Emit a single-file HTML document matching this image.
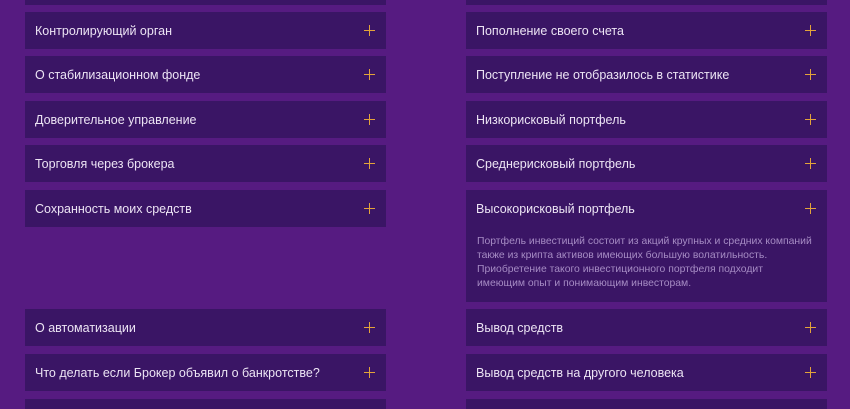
<!DOCTYPE html><html><head><meta charset="utf-8"><style>
html{overflow:hidden;height:409px}
body{margin:0;width:850px;height:409px;background:#561b81;overflow:hidden;font-family:"Liberation Sans",sans-serif;position:relative}
.c{position:absolute;background:#3a1565;width:361px;}
.t{position:absolute;left:10px;top:12px;font-size:12.5px;color:#ece4f4;white-space:nowrap}
.p{position:absolute;right:11px;top:13px;width:11px;height:11px}
.p:before{content:"";position:absolute;left:5px;top:0;width:1.3px;height:11px;background:#e3a33a}
.p:after{content:"";position:absolute;top:5px;left:0;height:1.3px;width:11px;background:#e3a33a}
.a{position:absolute;left:11px;top:45px;font-size:10.4px;line-height:14px;color:#a68cc4;width:342px}
</style></head><body>
<div class="c" style="left:25px;top:-32px;height:37px"></div>
<div class="c" style="left:466px;top:-32px;height:37px"></div>
<div class="c" style="left:25px;top:12px;height:37px"><div class="t">Контролирующий орган</div><div class="p"></div></div>
<div class="c" style="left:25px;top:56px;height:37px"><div class="t">О стабилизационном фонде</div><div class="p"></div></div>
<div class="c" style="left:25px;top:101px;height:37px"><div class="t">Доверительное управление</div><div class="p"></div></div>
<div class="c" style="left:25px;top:145px;height:37px"><div class="t">Торговля через брокера</div><div class="p"></div></div>
<div class="c" style="left:25px;top:190px;height:37px"><div class="t">Сохранность моих средств</div><div class="p"></div></div>
<div class="c" style="left:25px;top:309px;height:37px"><div class="t">О автоматизации</div><div class="p"></div></div>
<div class="c" style="left:25px;top:354px;height:37px"><div class="t">Что делать если Брокер объявил о банкротстве?</div><div class="p"></div></div>
<div class="c" style="left:25px;top:399px;height:10px"></div>
<div class="c" style="left:466px;top:12px;height:37px"><div class="t">Пополнение своего счета</div><div class="p"></div></div>
<div class="c" style="left:466px;top:56px;height:37px"><div class="t">Поступление не отобразилось в статистике</div><div class="p"></div></div>
<div class="c" style="left:466px;top:101px;height:37px"><div class="t">Низкорисковый портфель</div><div class="p"></div></div>
<div class="c" style="left:466px;top:145px;height:37px"><div class="t">Среднерисковый портфель</div><div class="p"></div></div>
<div class="c" style="left:466px;top:190px;height:112px"><div class="t">Высокорисковый портфель</div><div class="p"></div>
<div class="a">Портфель инвестиций состоит из акций крупных и средних компаний также из крипта активов имеющих большую волатильность. Приобретение такого инвестиционного портфеля подходит<br>имеющим опыт и понимающим инвесторам.</div></div>
<div class="c" style="left:466px;top:309px;height:37px"><div class="t">Вывод средств</div><div class="p"></div></div>
<div class="c" style="left:466px;top:354px;height:37px"><div class="t">Вывод средств на другого человека</div><div class="p"></div></div>
<div class="c" style="left:466px;top:399px;height:10px"></div>
</body></html>
